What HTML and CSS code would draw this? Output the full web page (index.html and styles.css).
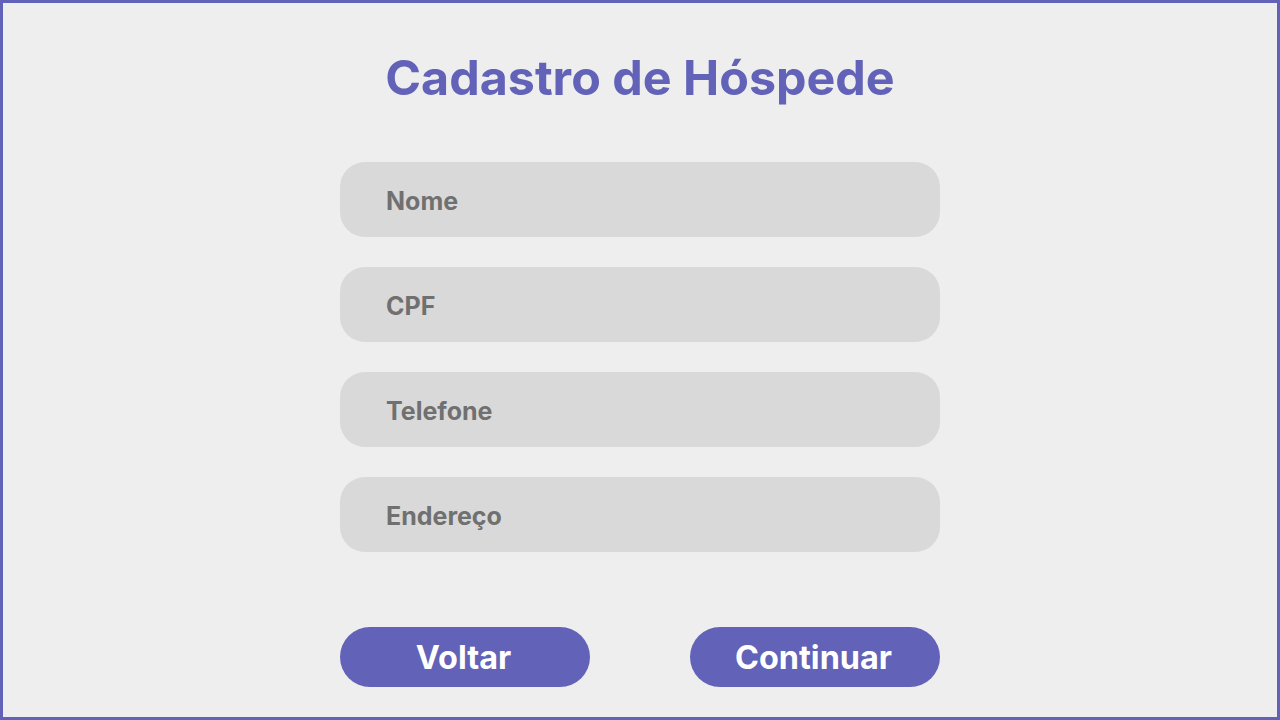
FILE: index.html
```html
<!DOCTYPE html>
<html lang="pt-BR">
<head>
<meta charset="utf-8">
<title>Cadastro de Hóspede</title>
<link rel="stylesheet" href="styles.css">
</head>
<body>
<main class="screen">
  <h1 class="title">Cadastro de Hóspede</h1>
  <form class="form">
    <div class="fields">
      <input class="field" type="text" placeholder="Nome">
      <input class="field" type="text" placeholder="CPF">
      <input class="field" type="text" placeholder="Telefone">
      <input class="field" type="text" placeholder="Endereço">
    </div>
    <div class="actions">
      <button class="btn" type="button">Voltar</button>
      <button class="btn" type="button">Continuar</button>
    </div>
  </form>
</main>
</body>
</html>
```
FILE: styles.css
```css
* { box-sizing: border-box; }
html, body { margin: 0; padding: 0; }
body {
  width: 1280px;
  height: 720px;
  background: #eeeeee;
  font-family: Inter, "Noto Sans", sans-serif;
}
.screen {
  width: 1280px;
  height: 720px;
  border: 3px solid #6262b8;
  display: flex;
  flex-direction: column;
  align-items: center;
  padding-top: 46px;
}
.title {
  margin: 0;
  font-size: 48.4px;
  font-weight: 700;
  line-height: 58px;
  color: #6262b8;
  text-align: center;
}
.form {
  width: 600px;
  margin-top: 55px;
  display: flex;
  flex-direction: column;
  gap: 75px;
}
.fields {
  display: flex;
  flex-direction: column;
  gap: 30px;
}
.field {
  width: 600px;
  height: 75px;
  border: none;
  outline: none;
  border-radius: 25px;
  background: #d9d9d9;
  padding: 2px 0 0 46px;
  font-family: Inter, "Noto Sans", sans-serif;
  font-size: 25px;
  font-weight: 700;
  color: #707070;
}
.field::placeholder {
  color: #707070;
  opacity: 1;
}
.actions {
  display: flex;
  justify-content: space-between;
}
.btn {
  width: 250px;
  height: 60px;
  border: none;
  border-radius: 30px;
  background: #6262b8;
  color: #ffffff;
  font-family: Inter, "Noto Sans", sans-serif;
  font-size: 32.4px;
  font-weight: 700;
  padding: 0 3px 0 0;
  cursor: pointer;
}
```
